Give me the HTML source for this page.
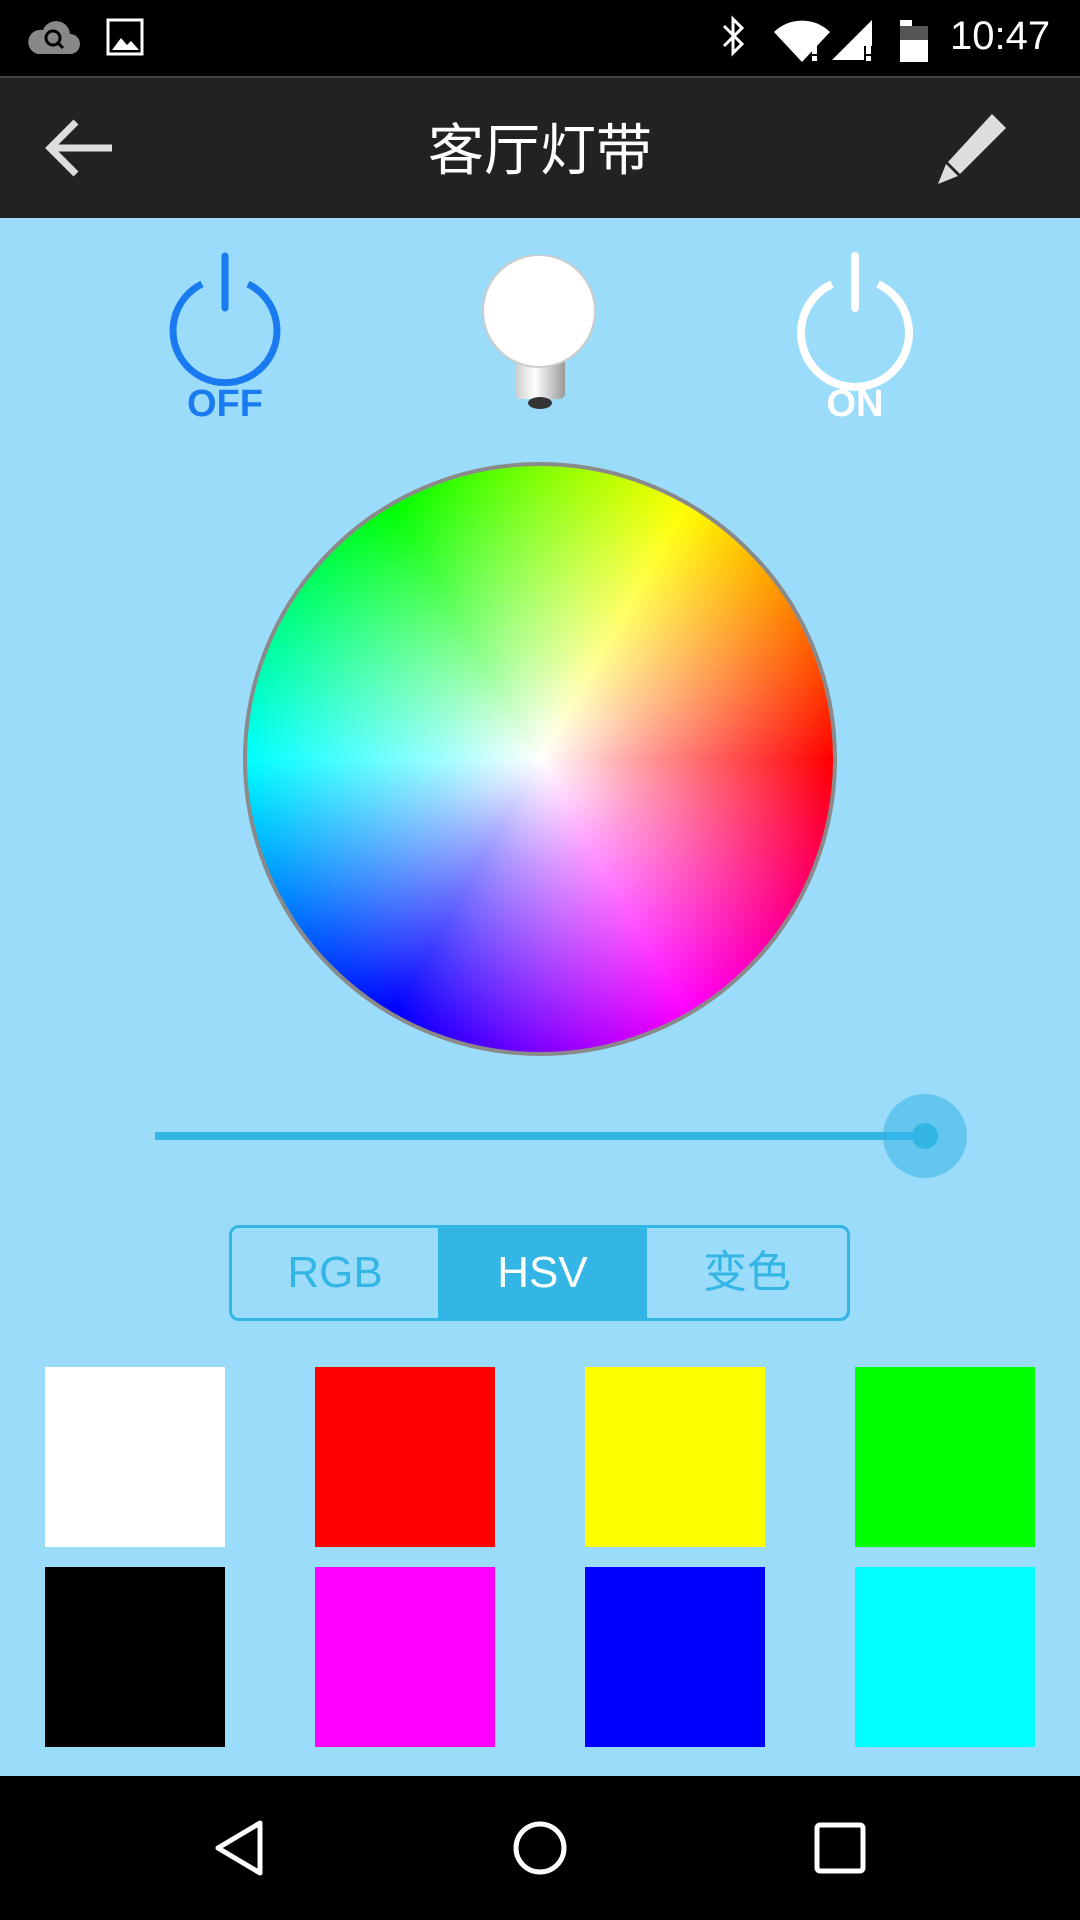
<!DOCTYPE html>
<html><head><meta charset="utf-8"><style>
*{margin:0;padding:0;box-sizing:border-box}
body{width:1080px;height:1920px;position:relative;background:#9cdcfb;font-family:"Liberation Sans","Noto Sans CJK SC",sans-serif;overflow:hidden}
.abs{position:absolute}
#status{left:0;top:0;width:1080px;height:76px;background:#000}
#bar{left:0;top:76px;width:1080px;height:142px;background:#222;border-top:2px solid #444}
#nav{left:0;top:1776px;width:1080px;height:144px;background:#000}
.sw{position:absolute;width:180px;height:180px}
</style></head><body>
<div id="status" class="abs">
<svg class="abs" style="left:26px;top:16px" width="56" height="44" viewBox="0 0 56 44"><path d="M12 38h32a10 10 0 0 0 0-20 14 14 0 0 0-27-4A11 11 0 0 0 12 38z" fill="#888"/><circle cx="27" cy="22" r="7" fill="none" stroke="#000" stroke-width="3"/><path d="M32 27l5 5" stroke="#000" stroke-width="3"/></svg>
<svg class="abs" style="left:106px;top:18px" width="38" height="38" viewBox="0 0 38 38"><rect x="2" y="2" width="34" height="34" fill="none" stroke="#fff" stroke-width="3"/><path d="M6 32l9-12 6 7 4-4 8 9z" fill="#fff"/></svg>
<svg class="abs" style="left:720px;top:14px" width="300" height="50" viewBox="0 0 300 50"><path d="M4 12l18 18-9 9V5l9 9L4 32" fill="none" stroke="#fff" stroke-width="3"/><path d="M54 18a40 40 0 0 1 56 0L82 48z" fill="#fff"/><rect x="92" y="24" width="5" height="16" fill="#fff"/><rect x="92" y="42" width="5" height="5" fill="#fff"/><path d="M112 46L152 6v26h-8v14z" fill="#fff"/><rect x="146" y="26" width="5" height="14" fill="#fff"/><rect x="146" y="42" width="5" height="5" fill="#fff"/><rect x="180" y="6" width="12" height="6" fill="#fff"/><rect x="180" y="12" width="28" height="36" fill="#fff"/><rect x="180" y="12" width="28" height="14" fill="#555"/></svg>
<div class="abs" style="left:950px;top:14px;color:#fff;font-size:40px">10:47</div>
</div>
<div id="bar" class="abs">
<svg class="abs" style="left:42px;top:38px" width="74" height="64" viewBox="0 0 74 64"><path d="M70 32H8M34 6L8 32l26 26" fill="none" stroke="#ddd" stroke-width="7"/></svg>
<div class="abs" style="left:0;width:1080px;top:28px;text-align:center;color:#fff;font-size:56px">客厅灯带</div>
<svg class="abs" style="left:932px;top:30px" width="80" height="80" viewBox="0 0 80 80"><path d="M60 6l14 14-46 46-12-12z" fill="#ddd"/><path d="M14 56l12 12-20 8z" fill="#ddd"/></svg>
</div>
<svg class="abs" style="left:160px;top:252px" width="130" height="170" viewBox="0 0 130 170"><path d="M42 32A52 52 0 1 0 88 32" fill="none" stroke="#1a7af0" stroke-width="7"/><path d="M65 4v52" stroke="#1a7af0" stroke-width="7" stroke-linecap="round"/><text x="65" y="164" text-anchor="middle" font-family="Liberation Sans" font-weight="bold" font-size="38" fill="#1a7af0">OFF</text></svg>
<svg class="abs" style="left:790px;top:252px" width="130" height="170" viewBox="0 0 130 170"><path d="M42 32A54 54 0 1 0 88 32" fill="none" stroke="#fff" stroke-width="8"/><path d="M65 4v52" stroke="#fff" stroke-width="8" stroke-linecap="round"/><text x="65" y="164" text-anchor="middle" font-family="Liberation Sans" font-weight="bold" font-size="38" fill="#fff">ON</text></svg>
<svg class="abs" style="left:475px;top:255px" width="130" height="165" viewBox="0 0 130 165"><defs><linearGradient id="b" x1="0" x2="1"><stop offset="0" stop-color="#ccc"/><stop offset=".4" stop-color="#fff"/><stop offset="1" stop-color="#999"/></linearGradient></defs><rect x="40" y="90" width="50" height="54" rx="6" fill="url(#b)"/><ellipse cx="65" cy="148" rx="12" ry="6" fill="#333"/><circle cx="64" cy="56" r="56" fill="#fff" stroke="#ccc" stroke-width="2"/></svg>
<div class="abs" style="left:243px;top:462px;width:594px;height:594px;border-radius:50%;border:4px solid #8a8a8a;background:radial-gradient(circle,#fff 0%,rgba(255,255,255,.6) 25%,rgba(255,255,255,0) 70%),conic-gradient(from 0deg,hsl(90,100%,50%),hsl(60,100%,50%) 30deg,hsl(30,100%,50%) 60deg,hsl(0,100%,50%) 90deg,hsl(330,100%,50%) 120deg,hsl(300,100%,50%) 150deg,hsl(270,100%,50%) 180deg,hsl(240,100%,50%) 210deg,hsl(210,100%,50%) 240deg,hsl(180,100%,50%) 270deg,hsl(150,100%,50%) 300deg,hsl(120,100%,50%) 330deg,hsl(90,100%,50%) 360deg)"></div>
<div class="abs" style="left:155px;top:1132px;width:770px;height:8px;background:#33b5e5"></div>
<div class="abs" style="left:883px;top:1094px;width:84px;height:84px;border-radius:50%;background:rgba(51,181,229,.55)"></div>
<div class="abs" style="left:912px;top:1123px;width:26px;height:26px;border-radius:50%;background:#33b5e5"></div>
<div class="abs" style="left:229px;top:1225px;width:621px;height:96px;border:3px solid #33b5e5;border-radius:10px;overflow:hidden;color:#33b5e5;font-size:44px">
<div class="abs" style="left:0;top:0;width:206px;height:90px;line-height:90px;text-align:center">RGB</div>
<div class="abs" style="left:206px;top:0;width:209px;height:90px;line-height:90px;text-align:center;background:#33b5e5;color:#fff">HSV</div>
<div class="abs" style="left:415px;top:0;width:200px;height:90px;line-height:90px;text-align:center">变色</div>
</div>
<div class="sw" style="left:45px;top:1367px;background:#fff"></div>
<div class="sw" style="left:315px;top:1367px;background:#f00"></div>
<div class="sw" style="left:585px;top:1367px;background:#ff0"></div>
<div class="sw" style="left:855px;top:1367px;background:#0f0"></div>
<div class="sw" style="left:45px;top:1567px;background:#000"></div>
<div class="sw" style="left:315px;top:1567px;background:#f0f"></div>
<div class="sw" style="left:585px;top:1567px;background:#00f"></div>
<div class="sw" style="left:855px;top:1567px;background:#0ff"></div>
<div id="nav" class="abs">
<svg class="abs" style="left:210px;top:42px" width="60" height="60" viewBox="0 0 60 60"><path d="M50 5v50L8 30z" fill="none" stroke="#fff" stroke-width="5" stroke-linejoin="round"/></svg>
<svg class="abs" style="left:510px;top:42px" width="60" height="60" viewBox="0 0 60 60"><circle cx="30" cy="30" r="24" fill="none" stroke="#fff" stroke-width="5"/></svg>
<svg class="abs" style="left:812px;top:44px" width="56" height="56" viewBox="0 0 56 56"><rect x="5" y="5" width="46" height="46" rx="3" fill="none" stroke="#fff" stroke-width="5"/></svg>
</div>
</body></html>
